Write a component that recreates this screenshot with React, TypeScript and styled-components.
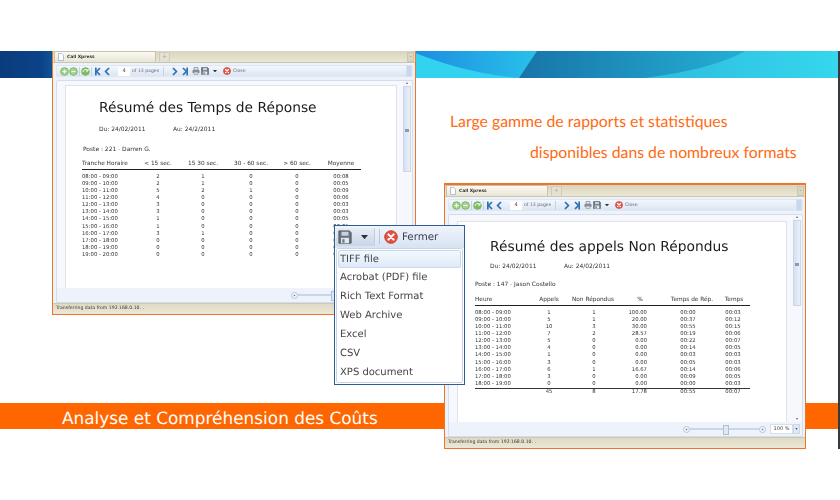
// App.tsx
import React from 'react';
import styled, { createGlobalStyle } from 'styled-components';

const GlobalStyle = createGlobalStyle`
  html, body {
    margin: 0;
    padding: 0;
    background: #ffffff;
  }
  * {
    box-sizing: border-box;
  }
`;

const sans = `"DejaVu Sans", Verdana, sans-serif`;

const Page = styled.div`
  position: relative;
  width: 840px;
  height: 500px;
  overflow: hidden;
  background: #ffffff;
  font-family: ${sans};
  text-rendering: geometricPrecision;
`;

const Slide = styled.div`
  display: flex;
  flex-direction: column;
  width: 840px;
  height: 398px;
  margin-top: 51px;
  border-right: 2px solid #37393b;
`;

const BannerArt = styled.svg`
  display: block;
  flex: none;
  width: 838px;
  height: 27px;
`;

const Callouts = styled.div`
  display: flex;
  flex-direction: column;
  padding-top: 28px;
  font-family: Lato, "Open Sans", sans-serif;
  font-size: 15.8px;
  line-height: 31px;
  color: #ff6a13;
`;

const Callout = styled.div<{ $indent: number }>`
  margin-left: ${(p) => p.$indent}px;
  white-space: nowrap;
`;

const OrangeBar = styled.div`
  flex: none;
  height: 26px;
  margin-top: auto;
  margin-bottom: 20px;
  padding-left: 62px;
  background: #ff6600;
  color: #ffffff;
  font-size: 16.9px;
  line-height: 30px;
  white-space: nowrap;
`;

/* the two report windows float on the slide */
const Window = styled.div<{ $x: number; $y: number; $w: number; $h: number; $noTop?: boolean }>`
  position: absolute;
  left: ${(p) => p.$x}px;
  top: ${(p) => p.$y}px;
  width: ${(p) => p.$w}px;
  height: ${(p) => p.$h}px;
  display: flex;
  flex-direction: column;
  border: 1.5px solid #ef7429;
  border-top-width: ${(p) => (p.$noTop ? 0 : 2)}px;
  background: #eef3fb;
  filter: blur(0.3px);
`;

const TabStrip = styled.div`
  flex: none;
  display: flex;
  align-items: flex-end;
  height: 12px;
  padding-left: 1px;
  background: linear-gradient(#d8d4be, #ebe7d2);
  border-bottom: 1px solid #c8c6b4;
`;

const Tab = styled.div`
  display: flex;
  align-items: center;
  gap: 3px;
  width: 102px;
  height: 11px;
  padding-left: 3px;
  background: linear-gradient(#fbfaf3, #e9e5d3);
  border: 1px solid #c5c2ae;
  border-bottom: none;
  font-size: 4.4px;
  font-weight: 700;
  color: #333;
`;

const AddTab = styled.div`
  width: 11px;
  height: 10px;
  margin-left: 3px;
  background: #e4e1d0;
  border: 1px solid #cfccba;
  border-bottom: none;
  color: #aaa;
  font-size: 6px;
  line-height: 8px;
  text-align: center;
`;

const MinButton = styled.div`
  width: 7px;
  height: 10px;
  margin-left: auto;
  margin-right: 1px;
  background: #d9d5c2;
  border: 1px solid #c8c6b4;
  color: #888;
  font-size: 6px;
  line-height: 7px;
  text-align: center;
`;

const Viewer = styled.div`
  flex: 1;
  min-height: 0;
  display: flex;
  flex-direction: column;
  padding: 2px 2px 0;
`;

const Toolbar = styled.div`
  flex: none;
  display: flex;
  align-items: center;
  height: 12px;
  margin-left: 1px;
  padding-left: 1px;
  background: linear-gradient(#f4f7fc, #dbe6f4);
  border: 1px solid #dfe7f2;
  border-radius: 2px;
  font-size: 4.6px;
  color: #667;
`;

const Slot = styled.span<{ $ml: number }>`
  display: inline-flex;
  flex: none;
  align-items: center;
  margin-left: ${(p) => p.$ml}px;
`;

const ToolSep = styled.span<{ $ml: number }>`
  flex: none;
  width: 1px;
  height: 9px;
  margin-left: ${(p) => p.$ml}px;
  background: #c5d3e6;
`;

const PageInput = styled.div`
  flex: none;
  width: 12px;
  height: 9px;
  margin-left: 6px;
  background: #ffffff;
  color: #444;
  font-size: 5px;
  line-height: 9px;
  text-align: center;
`;

const ToolEnd = styled.div`
  width: 6px;
  height: 12px;
  margin-left: auto;
  background: #c6d7ee;
  border: 1px solid #d4e0f0;
`;

const ContentFrame = styled.div`
  flex: 1;
  min-height: 0;
  display: flex;
  margin-top: 3px;
  margin-left: 1px;
  background: #f6f8fe;
  border: 1px solid #d3ddec;
  border-bottom: none;
  border-radius: 2px 2px 0 0;
`;

const PageSheet = styled.div<{ $top: number; $pad: number }>`
  flex: 1;
  min-width: 0;
  margin: ${(p) => p.$top}px 6px 0 8px;
  padding-top: ${(p) => p.$pad}px;
  background: #ffffff;
  border: 1px solid #dfe2e8;
  border-bottom: none;
  color: #333333;
`;

const ScrollColumn = styled.div`
  flex: none;
  display: flex;
  flex-direction: column;
  align-items: center;
  width: 8px;
  margin-right: 1px;
  font-size: 4px;
  color: #667;
  line-height: 4px;
`;

const ScrollThumb = styled.div<{ $h: number }>`
  position: relative;
  flex: none;
  width: 8px;
  height: ${(p) => p.$h}px;
  margin-top: 1px;
  background: linear-gradient(90deg, #d5e1f1, #eaf0f9);
  border: 1px solid #cbd7e7;
  &::after {
    content: '';
    position: absolute;
    left: 1px;
    top: 50%;
    width: 4px;
    height: 3px;
    background: #8b9ab3;
  }
`;

const ScrollDown = styled.div`
  margin-top: auto;
  padding-bottom: 1px;
`;

const BottomStrip = styled.div`
  flex: none;
  display: flex;
  align-items: center;
  height: 15px;
  padding-left: 234px;
  margin-left: 1px;
  background: #eef3fb;
  border: 1px solid #d3ddec;
  border-top: none;
`;

const Knob = styled.div`
  flex: none;
  width: 7px;
  height: 7px;
  border: 1px solid #b5c6de;
  border-radius: 50%;
  background: radial-gradient(#5c6f8f 20%, #f0f5fc 30%);
`;

const SliderTrack = styled.div`
  position: relative;
  flex: none;
  width: 69px;
  height: 2px;
  background: #c8d6ea;
  &::after {
    content: '';
    position: absolute;
    left: 33px;
    top: -3px;
    width: 4px;
    height: 8px;
    background: #dfe8f5;
    border: 1px solid #aebfd8;
  }
`;

const ZoomBox = styled.div`
  flex: none;
  width: 23px;
  height: 10px;
  margin-left: 4px;
  background: #ffffff;
  border: 1px solid #d6deeb;
  font-size: 5px;
  line-height: 8px;
  text-align: center;
  color: #444;
`;

const ZoomSpin = styled.div`
  flex: none;
  width: 7px;
  height: 10px;
  background: #dfe8f5;
  border: 1px solid #ccd8e9;
  font-size: 4px;
  line-height: 8px;
  text-align: center;
  color: #445;
`;

const StatusBar = styled.div`
  flex: none;
  height: 11px;
  padding-left: 3px;
  background: linear-gradient(#dedac4, #ece8d6);
  border-top: 1px solid #cbc8b4;
  font-size: 4.6px;
  line-height: 10px;
  color: #333;
  white-space: nowrap;
`;

const ReportTitle = styled.div<{ $left: number }>`
  margin-left: ${(p) => p.$left}px;
  font-size: 13.8px;
  line-height: 20px;
  color: #1b1b1b;
  white-space: nowrap;
`;

const DateRow = styled.div<{ $left: number; $top: number; $gap: number }>`
  display: flex;
  margin: ${(p) => p.$top}px 0 0 ${(p) => p.$left}px;
  font-size: 5.95px;
  line-height: 8px;
  white-space: nowrap;
  span {
    width: ${(p) => p.$gap}px;
    flex: none;
  }
`;

const PosteLine = styled.div<{ $left: number; $top: number }>`
  margin: ${(p) => p.$top}px 0 0 ${(p) => p.$left}px;
  font-size: 5.95px;
  line-height: 8px;
  white-space: nowrap;
`;

const ReportTable = styled.div<{ $left: number; $top: number; $w: number }>`
  width: ${(p) => p.$w}px;
  margin: ${(p) => p.$top}px 0 0 ${(p) => p.$left}px;
`;

const HeadRow = styled.div<{ $cols: string }>`
  display: grid;
  grid-template-columns: ${(p) => p.$cols};
  padding-bottom: 1px;
  font-size: 5.8px;
  line-height: 8px;
  border-bottom: 1.5px solid #222;
  white-space: nowrap;
`;

const BodyRows = styled.div`
  margin-top: 4px;
`;

const DataRow = styled.div<{ $cols: string }>`
  display: grid;
  grid-template-columns: ${(p) => p.$cols};
  height: 7.08px;
  font-size: 5.3px;
  line-height: 7px;
  white-space: nowrap;
`;

const TotalRow = styled(DataRow)`
  border-top: 1.5px solid #333;
  height: 8px;
`;

const Cell = styled.div<{ $align: string; $pad: number }>`
  text-align: ${(p) => p.$align};
  padding-right: ${(p) => p.$pad}px;
`;

const SaveMenu = styled.div`
  position: absolute;
  left: 334px;
  top: 225px;
  width: 131px;
  height: 160px;
  display: flex;
  flex-direction: column;
  background: #ffffff;
  border: 1.5px solid #2d5c96;
  filter: blur(0.3px);
`;

const MenuHead = styled.div`
  flex: none;
  display: flex;
  align-items: center;
  height: 21.5px;
  background: linear-gradient(#f0f4fb, #d7e3f3);
`;

const SaveButton = styled.div`
  flex: none;
  display: flex;
  align-items: center;
  gap: 9px;
  width: 39px;
  height: 18px;
  margin-left: 1px;
  padding-left: 2px;
  background: linear-gradient(#e6edf6, #c9d6e6);
  border-right: 1px solid #c2cfdf;
`;

const MenuDivider = styled.div`
  flex: none;
  width: 1px;
  height: 15px;
  margin-left: 4px;
  background: #b9c8dc;
`;

const CloseLabel = styled.span`
  margin-left: 4px;
  font-size: 10.3px;
  color: #3c3c4c;
`;

const MenuList = styled.div`
  flex: 1;
  margin: 0 1px 1px;
  padding: 1px;
  border: 1px solid #c8d4e4;
  border-radius: 2px;
`;

const MenuItem = styled.div<{ $active?: boolean }>`
  height: 18.85px;
  padding-left: 1px;
  font-size: 10px;
  line-height: 17.5px;
  color: #454545;
  white-space: nowrap;
  background: ${(p) => (p.$active ? 'linear-gradient(#f3f8fd, #dfeaf8)' : 'none')};
  border: 1px solid ${(p) => (p.$active ? '#c6d9f0' : 'transparent')};
  border-radius: 2px;
`;

const GreenIcon = ({ kind }: { kind: 'plus' | 'minus' | 'refresh' }) => (
  <svg width="9" height="9" viewBox="0 0 9 9">
    <circle cx="4.5" cy="4.5" r="3.8" fill={kind === 'refresh' ? '#7fbd62' : '#a9d494'} stroke="#79b560" strokeWidth="1" />
    {kind === 'refresh' ? (
      <path d="M2 5a2.5 2.5 0 0 1 4.4-1.6M7 2v2H5" fill="none" stroke="#fff" strokeWidth="1" />
    ) : (
      <path d={kind === 'plus' ? 'M2.5 4.5h4M4.5 2.5v4' : 'M2.5 4.5h4'} stroke="#f0fae8" strokeWidth="1" />
    )}
  </svg>
);

const NavIcon = ({ flip, end }: { flip?: boolean; end?: boolean }) => (
  <svg width="8" height="9" viewBox="0 0 8 9">
    <g transform={flip ? 'matrix(-1 0 0 1 8 0)' : undefined} fill="none" stroke="#2f6fb5" strokeWidth="1.7">
      <path d="M3 1l3.4 3.5L3 8" />
      {end && <path d="M7.2 0.5v8" />}
    </g>
  </svg>
);

const PrintIcon = () => (
  <svg width="8" height="8" viewBox="0 0 8 8">
    <path d="M2 3V.5h4V3z" fill="#e6e8ec" stroke="#7d8490" strokeWidth=".7" />
    <rect x=".5" y="3" width="7" height="3" rx=".6" fill="#868d9a" />
    <rect x="2" y="5" width="4" height="2.5" fill="#d8dbe1" stroke="#7d8490" strokeWidth=".5" />
  </svg>
);

const DiskIcon = ({ size }: { size: number }) => (
  <svg width={size} height={size} viewBox="0 0 16 16">
    <path d="M1 1h12l2 2v12H1z" fill="#6a7580" stroke="#4a535c" strokeWidth="1" />
    <rect x="4" y="2" width="8" height="4.5" fill="#c8d2dc" />
    <rect x="3.5" y="9" width="9" height="6" fill="#e4e9ee" />
    <rect x="5" y="10.5" width="2.5" height="4" fill="#6a7580" />
  </svg>
);

const CloseIcon = ({ size }: { size: number }) => (
  <svg width={size} height={size} viewBox="0 0 16 16">
    <circle cx="8" cy="8" r="7.2" fill="#e2533f" stroke="#c23a2a" strokeWidth="1" />
    <path d="M5 5l6 6M11 5l-6 6" stroke="#fff" strokeWidth="2.4" strokeLinecap="round" />
  </svg>
);

const DropArrow = ({ size }: { size: number }) => (
  <svg width={size} height={size * 0.6} viewBox="0 0 10 6">
    <path d="M0 0h10L5 6z" fill="#2b2f38" />
  </svg>
);

const DocIcon = () => (
  <svg width="6" height="8" viewBox="0 0 6 8">
    <path d="M.5.5h3.2L5.5 2.3v5.2h-5z" fill="#fff" stroke="#8fa8c8" strokeWidth=".7" />
  </svg>
);

const ToolbarRow = () => (
  <Toolbar>
    <Slot $ml={2}>
      <GreenIcon kind="plus" />
    </Slot>
    <Slot $ml={0}>
      <GreenIcon kind="minus" />
    </Slot>
    <ToolSep $ml={1} />
    <Slot $ml={0.5}>
      <GreenIcon kind="refresh" />
    </Slot>
    <ToolSep $ml={1} />
    <Slot $ml={3.5}>
      <NavIcon flip end />
    </Slot>
    <Slot $ml={1}>
      <NavIcon flip />
    </Slot>
    <PageInput>4</PageInput>
    <Slot $ml={2}>of 13 pages</Slot>
    <ToolSep $ml={4} />
    <Slot $ml={6}>
      <NavIcon />
    </Slot>
    <Slot $ml={2}>
      <NavIcon end />
    </Slot>
    <Slot $ml={3.5}>
      <PrintIcon />
    </Slot>
    <Slot $ml={1.5}>
      <DiskIcon size={8} />
    </Slot>
    <Slot $ml={4}>
      <DropArrow size={4} />
    </Slot>
    <Slot $ml={6}>
      <CloseIcon size={8} />
    </Slot>
    <Slot $ml={2}>Close</Slot>
    <ToolEnd />
  </Toolbar>
);

const WindowChrome: React.FC<{
  x: number;
  y: number;
  w: number;
  h: number;
  noTop?: boolean;
  pageTop: number;
  pagePad: number;
  thumb: number;
  children: React.ReactNode;
}> = ({ x, y, w, h, noTop, pageTop, pagePad, thumb, children }) => (
  <Window $x={x} $y={y} $w={w} $h={h} $noTop={noTop}>
    <TabStrip>
      <Tab>
        <DocIcon />
        Call Xpress
      </Tab>
      <AddTab>+</AddTab>
      <MinButton>-</MinButton>
    </TabStrip>
    <Viewer>
      <ToolbarRow />
      <ContentFrame>
        <PageSheet $top={pageTop} $pad={pagePad}>
          {children}
        </PageSheet>
        <ScrollColumn>
          <span>▴</span>
          <ScrollThumb $h={thumb} />
          <ScrollDown>▾</ScrollDown>
        </ScrollColumn>
      </ContentFrame>
      <BottomStrip>
        <Knob />
        <SliderTrack />
        <Knob />
        <ZoomBox>100 %</ZoomBox>
        <ZoomSpin>▾</ZoomSpin>
      </BottomStrip>
    </Viewer>
    <StatusBar>Transferring data from 192.168.0.10. .</StatusBar>
  </Window>
);

const timeColumns = '54px 44px 46px 50px 42px 46px';
const tempsRows = [
  ['08:00 - 09:00', '2', '1', '0', '0', '00:08'],
  ['09:00 - 10:00', '2', '1', '0', '0', '00:05'],
  ['10:00 - 11:00', '5', '2', '1', '0', '00:09'],
  ['11:00 - 12:00', '4', '0', '0', '0', '00:06'],
  ['12:00 - 13:00', '3', '0', '0', '0', '00:03'],
  ['13:00 - 14:00', '3', '0', '0', '0', '00:03'],
  ['14:00 - 15:00', '1', '0', '0', '0', '00:05'],
  ['15:00 - 16:00', '1', '0', '0', '0', '00:05'],
  ['16:00 - 17:00', '3', '1', '0', '0', '00:05'],
  ['17:00 - 18:00', '0', '0', '0', '0', '00:00'],
  ['18:00 - 19:00', '0', '0', '0', '0', '00:00'],
  ['19:00 - 20:00', '0', '0', '0', '0', '00:00'],
];

const missedHead = '52px 44px 44px 50px 54px 30px';
const missedColumns = '52px 44px 46px 46px 50px 40px';
const missedRows = [
  ['08:00 - 09:00', '1', '1', '100.00', '00:00', '00:03'],
  ['09:00 - 10:00', '5', '1', '20.00', '00:37', '00:12'],
  ['10:00 - 11:00', '10', '3', '30.00', '00:55', '00:15'],
  ['11:00 - 12:00', '7', '2', '28.57', '00:19', '00:06'],
  ['12:00 - 13:00', '5', '0', '0.00', '00:22', '00:07'],
  ['13:00 - 14:00', '4', '0', '0.00', '00:14', '00:05'],
  ['14:00 - 15:00', '1', '0', '0.00', '00:03', '00:03'],
  ['15:00 - 16:00', '3', '0', '0.00', '00:05', '00:03'],
  ['16:00 - 17:00', '6', '1', '16.67', '00:14', '00:06'],
  ['17:00 - 18:00', '3', '0', '0.00', '00:09', '00:05'],
  ['18:00 - 19:00', '0', '0', '0.00', '00:00', '00:03'],
];

const formats = ['TIFF file', 'Acrobat (PDF) file', 'Rich Text Format', 'Web Archive', 'Excel', 'CSV', 'XPS document'];

const Banner = () => (
  <BannerArt viewBox="0 0 838 27" preserveAspectRatio="none">
    <defs>
      <linearGradient id="navy" x1="0" x2="1">
        <stop offset="0" stopColor="#0a3c7c" />
        <stop offset="0.7" stopColor="#0b4388" />
        <stop offset="1" stopColor="#14609f" />
      </linearGradient>
      <linearGradient id="sky" x1="0" x2="1">
        <stop offset="0" stopColor="#1d8be0" />
        <stop offset="1" stopColor="#29c2ea" />
      </linearGradient>
      <linearGradient id="teal" x1="0" x2="1">
        <stop offset="0" stopColor="#1874a9" />
        <stop offset="1" stopColor="#25b3d8" />
      </linearGradient>
      <linearGradient id="cyan" x1="0" x2="1">
        <stop offset="0" stopColor="#2fbcdd" />
        <stop offset="1" stopColor="#35d6ee" />
      </linearGradient>
    </defs>
    <rect x="0" y="0" width="60" height="27" fill="url(#navy)" />
    <rect x="410" y="0" width="130" height="27" fill="url(#sky)" />
    <path d="M410 0C445 14 480 24 522 27H410z" fill="#33d2ef" />
    <path d="M537 0H760V27H519z" fill="url(#teal)" />
    <path d="M645 27C690 21 725 12 745 0H838V27z" fill="url(#cyan)" />
  </BannerArt>
);

const App: React.FC = () => {
  return (
    <Page>
      <GlobalStyle />
      <Slide>
        <Banner />
        <Callouts>
          <Callout $indent={450}>Large gamme de rapports et statistiques</Callout>
          <Callout $indent={530}>disponibles dans de nombreux formats</Callout>
        </Callouts>
        <OrangeBar>Analyse et Compréhension des Coûts</OrangeBar>
      </Slide>

      <WindowChrome x={52} y={51} w={364} h={264} noTop pageTop={4} pagePad={12} thumb={86}>
        <ReportTitle $left={33}>Résumé des Temps de Réponse</ReportTitle>
        <DateRow $left={33} $top={8} $gap={74}>
          <span>Du: 24/02/2011</span>
          <span>Au: 24/2/2011</span>
        </DateRow>
        <PosteLine $left={17} $top={12}>
          Poste : 221 - Darren G.
        </PosteLine>
        <ReportTable $left={16} $top={6} $w={279}>
          <HeadRow $cols={timeColumns}>
            {['Tranche Horaire', '< 15 sec.', '15  30 sec.', '30 - 60 sec.', '> 60 sec.', 'Moyenne'].map((h, i) => (
              <Cell key={h} $align={i === 0 ? 'left' : 'center'} $pad={0}>
                {h}
              </Cell>
            ))}
          </HeadRow>
          <BodyRows>
            {tempsRows.map((row) => (
              <DataRow key={row[0]} $cols={timeColumns}>
                {row.map((c, i) => (
                  <Cell key={i} $align={i === 0 ? 'left' : 'center'} $pad={0}>
                    {c}
                  </Cell>
                ))}
              </DataRow>
            ))}
          </BodyRows>
        </ReportTable>
      </WindowChrome>

      <WindowChrome x={444} y={183} w={362} h={266} pageTop={6} pagePad={15} thumb={86}>
        <ReportTitle $left={32}>Résumé des appels Non Répondus</ReportTitle>
        <DateRow $left={32} $top={6} $gap={74}>
          <span>Du: 24/02/2011</span>
          <span>Au: 24/02/2011</span>
        </DateRow>
        <PosteLine $left={17} $top={10}>
          Poste : 147 - Jason Costello
        </PosteLine>
        <ReportTable $left={17} $top={7} $w={275}>
          <HeadRow $cols={missedHead}>
            {['Heure', 'Appels', 'Non Répondus', '%', 'Temps de Rép.', 'Temps'].map((h, i) => (
              <Cell key={h} $align={i === 0 ? 'left' : 'center'} $pad={0}>
                {h}
              </Cell>
            ))}
          </HeadRow>
          <BodyRows>
            {missedRows.map((row) => (
              <DataRow key={row[0]} $cols={missedColumns}>
                {row.map((c, i) => (
                  <Cell key={i} $align={i === 0 ? 'left' : i === 3 ? 'right' : 'center'} $pad={i === 3 ? 16 : 0}>
                    {c}
                  </Cell>
                ))}
              </DataRow>
            ))}
            <TotalRow $cols={missedColumns}>
              {['', '45', '8', '17.78', '00:55', '00:07'].map((c, i) => (
                <Cell key={i} $align={i === 3 ? 'right' : 'center'} $pad={i === 3 ? 16 : 0}>
                  {c}
                </Cell>
              ))}
            </TotalRow>
          </BodyRows>
        </ReportTable>
      </WindowChrome>

      <SaveMenu>
        <MenuHead>
          <SaveButton>
            <DiskIcon size={14} />
            <DropArrow size={7} />
          </SaveButton>
          <MenuDivider />
          <Slot $ml={4}>
            <CloseIcon size={14} />
          </Slot>
          <CloseLabel>Fermer</CloseLabel>
        </MenuHead>
        <MenuList>
          {formats.map((f, i) => (
            <MenuItem key={f} $active={i === 0}>
              {f}
            </MenuItem>
          ))}
        </MenuList>
      </SaveMenu>
    </Page>
  );
};

export default App;
